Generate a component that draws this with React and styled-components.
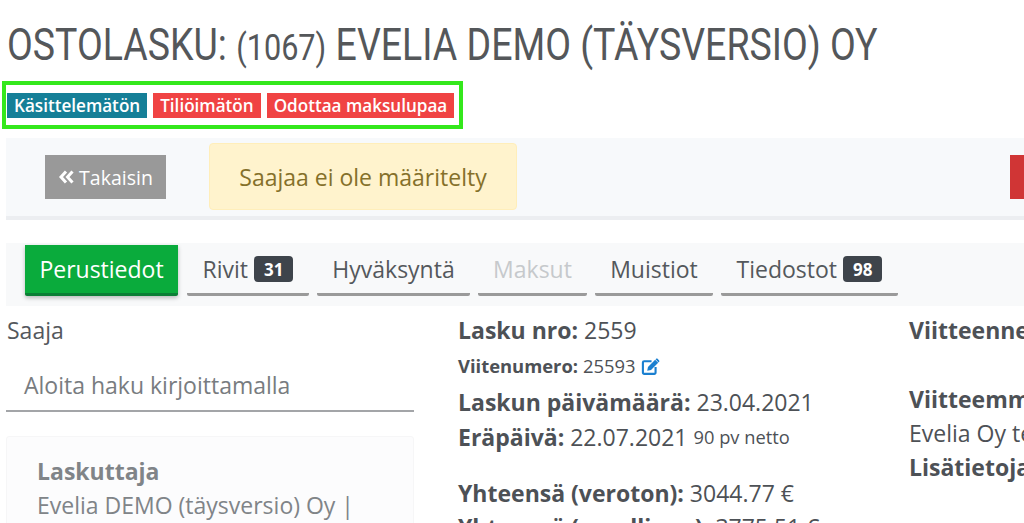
import React from 'react';
import styled, { createGlobalStyle } from 'styled-components';

const Global = createGlobalStyle`
  html, body { margin: 0; padding: 0; background: #fff; overflow: hidden; }
  #root { width: 1024px; height: 523px; overflow: hidden; }
`;

const Page = styled.div`
  width: 1024px;
  height: 523px;
  overflow: hidden;
  padding: 20px 0 0 6px;
  box-sizing: border-box;
  font-family: "Open Sans", sans-serif;
  color: #4d5156;
`;

const Title = styled.h1`
  margin: 0 0 0 1px;
  font-family: Roboto, sans-serif;
  font-weight: 400;
  font-size: 44px;
  line-height: 50px;
  height: 50px;
  color: #54575a;
  white-space: nowrap;
  transform: scaleX(0.852);
  transform-origin: left center;
  small { font-size: 36px; }
`;

const BadgeFrame = styled.div`
  display: inline-flex;
  gap: 6px;
  margin: 11px 0 0 -4px;
  padding: 8px 5px 7px 1px;
  border: 4px solid #34e81c;
`;

const Badge = styled.span`
  display: block;
  height: 25px;
  line-height: 25px;
  padding: 0 7px;
  font-size: 17.1px;
  font-weight: 600;
  color: #fff;
  white-space: nowrap;
  background: ${p => p.$bg};
`;

const Toolbar = styled.div`
  display: flex;
  align-items: flex-start;
  width: 1100px;
  height: 82px;
  margin-top: 9px;
  padding: 5px 0 0 39px;
  box-sizing: border-box;
  background: #f7f9fb;
  border-bottom: 4px solid #eceef1;
`;

const BackButton = styled.div`
  display: flex;
  align-items: center;
  justify-content: center;
  gap: 4px;
  width: 121px;
  height: 44px;
  margin-top: 12px;
  background: #999;
  color: #fff;
  font-size: 19.5px;
`;

const Alert = styled.div`
  width: 308px;
  height: 67px;
  margin-left: 43px;
  box-sizing: border-box;
  display: flex;
  align-items: center;
  justify-content: center;
  background: #fff3cd;
  border: 1px solid #ffeeba;
  border-radius: 4px;
  color: #85702a;
  font-size: 23px;
`;

const DangerButton = styled.div`
  width: 60px;
  height: 44px;
  margin: 12px 0 0 493px;
  background: #d03535;
`;

const Tabs = styled.div`
  display: flex;
  gap: 8px;
  width: 1100px;
  height: 63px;
  margin-top: 23px;
  padding: 2px 0 0 19px;
  box-sizing: border-box;
  background: #f8f9fa;
`;

const Tab = styled.div`
  display: flex;
  align-items: center;
  justify-content: center;
  gap: 6px;
  width: ${p => p.$w}px;
  height: 51px;
  margin-right: ${p => (p.$active ? 1 : 0)}px;
  box-sizing: border-box;
  font-size: 23px;
  white-space: nowrap;
  color: ${p => (p.$active ? '#fff' : p.$muted ? '#c6c9cc' : '#54585c')};
  background: ${p => (p.$active ? '#0aab3c' : 'transparent')};
  border-bottom: 3px solid ${p => (p.$active ? '#0b7f35' : '#9a9a9a')};
  border-radius: 0 0 2px 2px;
  box-shadow: ${p => (p.$active ? '0 2px 4px rgba(0,0,0,.25)' : 'none')};
`;

const Count = styled.span`
  display: inline-block;
  height: 26px;
  line-height: 27px;
  padding: 0 10px;
  border-radius: 4px;
  background: #3e444b;
  color: #fff;
  font-size: 17px;
  font-weight: 700;
`;

const Columns = styled.div`
  display: grid;
  grid-template-columns: 408px 407px 200px;
  column-gap: 44px;
  width: 1100px;
  padding-top: 7px;
  font-size: 23px;
  line-height: 34px;
`;

const ColumnRight = styled.div`
  white-space: nowrap;
`;

const Label = styled.div`
  color: #54585c;
  margin-left: 1px;
`;

const SearchField = styled.div`
  height: 53px;
  margin-top: 12px;
  padding: 0 0 0 18px;
  box-sizing: border-box;
  line-height: 52px;
  border-bottom: 2px solid #a3a5a8;
  color: #787c80;
`;

const Card = styled.div`
  margin-top: 24px;
  padding: 17px 30px;
  color: #808488;
  background: #fcfcfd;
  border: 1px solid #f6f6f7;
  border-radius: 3px;
  white-space: nowrap;
`;

const Line = styled.div`
  white-space: nowrap;
  height: ${p => p.$h || 34}px;
  line-height: ${p => p.$h || 34}px;
  font-size: ${p => p.$size || 23}px;
  margin-top: ${p => p.$top || 0}px;
  display: flex;
  align-items: center;
  gap: 6px;
`;

const Note = styled.span`
  font-size: 18.3px;
`;

const Edit = () => (
  <svg width="19" height="17" viewBox="0 0 18 16" aria-hidden="true">
    <path d="M10 3H3a1.200 1.200 0 0 0-1.200 1.200v9.600A1.200 1.200 0 0 0 3 15h9.600a1.200 1.200 0 0 0 1.200-1.200V8.500" fill="none" stroke="#1a7fd0" strokeWidth="2" />
    <path d="M13.400 1.600l2.900 2.900-6.800 6.800-3.600.7.7-3.600zM14.300.7c.4-.4 1-.4 1.400 0l1.500 1.500c.4.4.4 1 0 1.400l-.5.5-2.900-2.900z" fill="#1a7fd0" />
  </svg>
);

const Chevrons = () => (
  <svg width="17" height="14" viewBox="0 0 16 14" aria-hidden="true">
    <path d="M7.500 1.500L2.500 7l5 5.500M14 1.500L9 7l5 5.500" fill="none" stroke="#fff" strokeWidth="3" />
  </svg>
);

export default function App() {
  return (
    <Page>
      <Global />
      <Title>OSTOLASKU: <small>(1067)</small> EVELIA DEMO (TÄYSVERSIO) OY</Title>
      <BadgeFrame>
        <Badge $bg="#157f97">Käsittelemätön</Badge>
        <Badge $bg="#f04343">Tiliöimätön</Badge>
        <Badge $bg="#f04343">Odottaa maksulupaa</Badge>
      </BadgeFrame>
      <Toolbar>
        <BackButton><Chevrons />Takaisin</BackButton>
        <Alert>Saajaa ei ole määritelty</Alert>
        <DangerButton />
      </Toolbar>
      <Tabs>
        <Tab $w={153} $active>Perustiedot</Tab>
        <Tab $w={122}>Rivit<Count>31</Count></Tab>
        <Tab $w={153}>Hyväksyntä</Tab>
        <Tab $w={109} $muted>Maksut</Tab>
        <Tab $w={118}>Muistiot</Tab>
        <Tab $w={177}>Tiedostot<Count>98</Count></Tab>
      </Tabs>
      <Columns>
        <div>
          <Label>Saaja</Label>
          <SearchField>Aloita haku kirjoittamalla</SearchField>
          <Card>
            <strong>Laskuttaja</strong>
            <div>Evelia DEMO (täysversio) Oy |</div>
          </Card>
        </div>
        <div>
          <Line><span><strong>Lasku nro:</strong> 2559</span></Line>
          <Line $size={18.4} $h={36} $top={1}><span><strong>Viitenumero:</strong> 25593</span><Edit /></Line>
          <Line $h={36}><span><strong>Laskun päivämäärä:</strong> 23.04.2021</span></Line>
          <Line><span><strong>Eräpäivä:</strong> 22.07.2021</span><Note>90 pv netto</Note></Line>
          <Line $top={22}><span><strong>Yhteensä (veroton):</strong> 3044.77 €</span></Line>
          <Line><span><strong>Yhteensä (verollinen):</strong> 3775.51 €</span></Line>
        </div>
        <ColumnRight>
          <strong>Viitteenne</strong>
          <Line $top={35}><strong>Viitteemme</strong></Line>
          <div>Evelia Oy testi</div>
          <strong>Lisätietoja</strong>
        </ColumnRight>
      </Columns>
    </Page>
  );
}
